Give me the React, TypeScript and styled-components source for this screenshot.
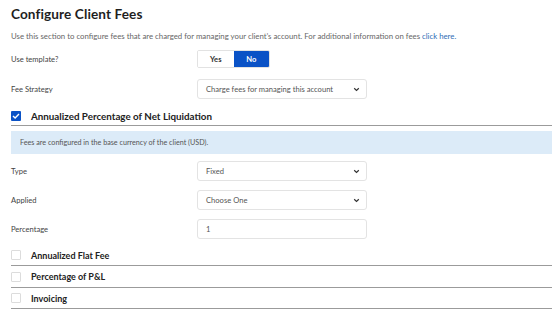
import styled, { createGlobalStyle } from 'styled-components';

const GlobalStyle = createGlobalStyle`
	html, body {
		margin: 0;
		padding: 0;
		background: #ffffff;
	}
	body {
		font-family: Lato, "Liberation Sans", sans-serif;
		color: #2b2b2b;
	}
`;

function Chevron() {
	return (
		<svg width="7" height="5" viewBox="0 0 7 5" aria-hidden="true">
			<path d="M1.2 1.3 L3.5 3.5 L5.8 1.3" fill="none" stroke="#333" strokeWidth="1.2" />
		</svg>
	);
}

function Check() {
	return (
		<svg width="8" height="6" viewBox="0 0 8 6" aria-hidden="true">
			<path d="M1 3 L3.1 5 L7 1" fill="none" stroke="#fff" strokeWidth="1.4" />
		</svg>
	);
}

const otherSections = ['Annualized Flat Fee', 'Percentage of P&L', 'Invoicing'];

export default function App() {
	return (
		<Page>
			<GlobalStyle />
			<Title>Configure Client Fees</Title>
			<Intro>
				Use this section to configure fees that are charged for managing your client’s account. For additional
				information on fees <a href="#">click here.</a>
			</Intro>

			<FormRow $top={9}>
				<Label>Use template?</Label>
				<Toggle>
					<ToggleOption>Yes</ToggleOption>
					<ToggleOption $active>No</ToggleOption>
				</Toggle>
			</FormRow>

			<FormRow $top={11}>
				<Label>Fee Strategy</Label>
				<Select>
					<span>Charge fees for managing this account</span>
					<Chevron />
				</Select>
			</FormRow>

			<SectionHeader $main>
				<Box $checked>
					<Check />
				</Box>
				<SectionTitle $main>Annualized Percentage of Net Liquidation</SectionTitle>
			</SectionHeader>

			<Notice>Fees are configured in the base currency of the client (USD).</Notice>

			<FormRow $top={7}>
				<Label>Type</Label>
				<Select>
					<span>Fixed</span>
					<Chevron />
				</Select>
			</FormRow>
			<FormRow $top={9}>
				<Label>Applied</Label>
				<Select>
					<span>Choose One</span>
					<Chevron />
				</Select>
			</FormRow>
			<FormRow $top={9}>
				<Label>Percentage</Label>
				<Input>1</Input>
			</FormRow>

			<Sections>
				{otherSections.map((name) => (
					<SectionHeader key={name}>
						<Box />
						<SectionTitle>{name}</SectionTitle>
					</SectionHeader>
				))}
			</Sections>
		</Page>
	);
}

const Page = styled.div({
	width: '541px',
	padding: '0 0 0 11px',
});

const Title = styled.h1({
	margin: 0,
	paddingTop: '6px',
	fontSize: '13.6px',
	lineHeight: '16px',
	fontWeight: 700,
	color: '#1f1f1f',
	letterSpacing: '0.1px',
});

const Intro = styled.p({
	margin: '9px 0 0',
	fontSize: '7.8px',
	lineHeight: '10px',
	color: '#666',
	a: {
		color: '#2f6db5',
		textDecoration: 'none',
	},
});

const FormRow = styled.div<{ $top: number }>(({ $top }) => ({
	display: 'grid',
	gridTemplateColumns: '186px 170px',
	alignItems: 'center',
	marginTop: `${$top}px`,
}));

const Label = styled.div({
	fontSize: '7.6px',
	color: '#444',
});

const Toggle = styled.div({
	display: 'flex',
	width: '73px',
	height: '18px',
	borderRadius: '2px',
	overflow: 'hidden',
	border: '1px solid #e2e2e2',
	boxSizing: 'border-box',
});

const ToggleOption = styled.div<{ $active?: boolean }>(({ $active }) => ({
	flex: 1,
	display: 'flex',
	alignItems: 'center',
	justifyContent: 'center',
	fontSize: '7.6px',
	fontWeight: 700,
	background: $active ? '#0a52c6' : '#ffffff',
	color: $active ? '#ffffff' : '#333',
}));

const Select = styled.div({
	display: 'flex',
	alignItems: 'center',
	justifyContent: 'space-between',
	height: '20px',
	boxSizing: 'border-box',
	padding: '0 6px 0 8px',
	border: '1px solid #e3e3e3',
	borderRadius: '3px',
	fontSize: '7.6px',
	color: '#555',
});

const Input = styled(Select)({
	justifyContent: 'flex-start',
});

const SectionHeader = styled.div<{ $main?: boolean }>(({ $main }) => ({
	display: 'flex',
	alignItems: 'center',
	gap: '10px',
	height: '20px',
	marginTop: $main ? '7px' : 0,
	borderBottom: '1.5px solid #9b9b9b',
	boxSizing: 'border-box',
	paddingBottom: $main ? '0' : '1px',
}));

const Box = styled.div<{ $checked?: boolean }>(({ $checked }) => ({
	width: '10px',
	height: '10px',
	boxSizing: 'border-box',
	display: 'flex',
	alignItems: 'center',
	justifyContent: 'center',
	borderRadius: '1px',
	background: $checked ? '#0a52c6' : '#fff',
	border: $checked ? 'none' : '1px solid #dcdcdc',
}));

const SectionTitle = styled.div<{ $main?: boolean }>(({ $main }) => ({
	fontSize: $main ? '9.8px' : '9px',
	fontWeight: 700,
	color: '#222',
}));

const Notice = styled.div({
	marginTop: '5px',
	height: '23px',
	display: 'flex',
	alignItems: 'center',
	padding: '0 9px',
	background: '#dcebf8',
	fontSize: '7.2px',
	color: '#555',
});

const Sections = styled.div({
	marginTop: '7px',
	display: 'flex',
	flexDirection: 'column',
	gap: '1.5px',
});
